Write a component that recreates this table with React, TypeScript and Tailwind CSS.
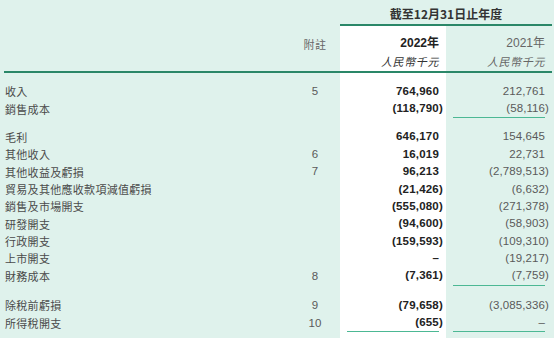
import React from "react";

type R = { label: string; note?: string; a: string; b: string; underline?: boolean } | { spacer: number };

const rows: R[] = [
  { label: "收入", note: "5", a: "764,960", b: "212,761" },
  { label: "銷售成本", a: "(118,790)", b: "(58,116)", underline: true },
  { spacer: 11 },
  { label: "毛利", a: "646,170", b: "154,645" },
  { label: "其他收入", note: "6", a: "16,019", b: "22,731" },
  { label: "其他收益及虧損", note: "7", a: "96,213", b: "(2,789,513)" },
  { label: "貿易及其他應收款項減值虧損", a: "(21,426)", b: "(6,632)" },
  { label: "銷售及市場開支", a: "(555,080)", b: "(271,378)" },
  { label: "研發開支", a: "(94,600)", b: "(58,903)" },
  { label: "行政開支", a: "(159,593)", b: "(109,310)" },
  { label: "上市開支", a: "–", b: "(19,217)" },
  { label: "財務成本", note: "8", a: "(7,361)", b: "(7,759)", underline: true },
  { spacer: 12 },
  { label: "除稅前虧損", note: "9", a: "(79,658)", b: "(3,085,336)" },
  { label: "所得稅開支", note: "10", a: "(655)", b: "–", underline: true },
];

const cjk = { fontFamily: '"Noto Sans CJK TC", "Noto Sans", sans-serif' };
const num = { fontFamily: '"Liberation Sans", Arial, "Noto Sans CJK TC", sans-serif' };

function NumCell({ v, white, bold, underline }: { v: string; white?: boolean; bold?: boolean; underline?: boolean }) {
  const paren = v.startsWith("(");
  return (
    <div className={`flex flex-col h-full ${white ? "bg-white" : ""}`}>
      <div
        className={`flex-1 flex items-center justify-end ${paren ? "pr-[3px]" : "pr-[7px]"} text-[11.5px] ${
          bold ? "font-bold text-[#222] tracking-[0.2px]" : "text-[#5a5a5a] tracking-[0.1px]"
        }`}
        style={num}
      >
        {v}
      </div>
      {underline ? <div className="mx-[7px] h-px bg-[#4cb894]" /> : null}
    </div>
  );
}

export default function App() {
  return (
    <div className="w-[554px] h-[338px] bg-[#dff2ec] overflow-hidden pl-[4px]">
      {/* top header */}
      <div className="grid grid-cols-[286px_50px_212px] h-[24px]">
        <div />
        <div />
        <div className="flex items-center justify-center text-[12px] font-bold text-[#333] pt-[4px]" style={cjk}>
          截至12月31日止年度
        </div>
      </div>
      <div className="grid grid-cols-[286px_50px_212px]">
        <div />
        <div />
        <div className="h-[1.5px] bg-[#2a8768]" />
      </div>
      {/* column header */}
      <div className="grid grid-cols-[286px_50px_106px_106px] h-[45.5px]">
        <div />
        <div className="flex flex-col items-center pt-[10px] text-[11px] text-[#666] tracking-[0.5px]" style={cjk}>
          附註
        </div>
        <div className="bg-white flex flex-col items-end pr-[7px] pt-[9px]">
          <div className="text-[12px] font-bold text-[#222] leading-[17px]" style={num}>
            2022年
          </div>
          <div className="text-[11px] italic text-[#333] tracking-[0.6px] leading-[18px]" style={cjk}>
            人民幣千元
          </div>
        </div>
        <div className="flex flex-col items-end pr-[7px] pt-[9px]">
          <div className="text-[12px] text-[#666] leading-[17px]" style={num}>
            2021年
          </div>
          <div className="text-[11px] italic text-[#666] tracking-[0.6px] leading-[18px]" style={cjk}>
            人民幣千元
          </div>
        </div>
      </div>
      <div className="w-[548px] h-[1.5px] bg-[#2a8768]" />
      <div className="grid grid-cols-[286px_50px_106px_106px] h-[10px]">
        <div />
        <div />
        <div className="bg-white" />
        <div />
      </div>
      {rows.map((r, i) =>
        "spacer" in r ? (
          <div key={i} className="grid grid-cols-[286px_50px_106px_106px]" style={{ height: r.spacer }}>
            <div />
            <div />
            <div className="bg-white" />
            <div />
          </div>
        ) : (
          <div key={i} className="grid grid-cols-[286px_50px_106px_106px] h-[17.4px]">
            <div className="flex items-center pl-[1px] text-[11px] text-[#4a4a4a] tracking-[0.3px] whitespace-nowrap" style={cjk}>
              {r.label}
            </div>
            <div className="flex items-center justify-center text-[11.5px] text-[#5a5a5a]" style={num}>
              {r.note ?? ""}
            </div>
            <NumCell v={r.a} white bold underline={r.underline} />
            <NumCell v={r.b} underline={r.underline} />
          </div>
        )
      )}
      <div className="grid grid-cols-[286px_50px_106px_106px] h-[20px]">
        <div />
        <div />
        <div className="bg-white" />
        <div />
      </div>
    </div>
  );
}
